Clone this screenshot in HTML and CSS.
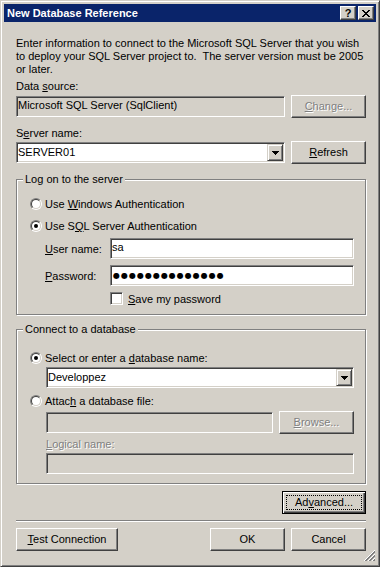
FILE: index.html
```html
<!DOCTYPE html>
<html lang="en">
<head>
    <meta charset="UTF-8">
    <title>New Database Reference</title>
    <link rel="stylesheet" href="styles.css">
</head>
<body>
    <div class="window">
        <div class="titlebar">
            <span class="title">New Database Reference</span>
            <span class="cap-btn help">?</span>
            <span class="cap-btn">
                <svg width="8" height="7" viewBox="0 0 8 7"><path d="M0 0h2v1H0zM6 0h2v1H6zM1 1h2v1H1zM5 1h2v1H5zM2 2h4v1H2zM3 3h2v1H3zM2 4h4v1H2zM1 5h2v1H1zM5 5h2v1H5zM0 6h2v1H0zM6 6h2v1H6z" fill="#000"/></svg>
            </span>
        </div>

        <div class="content">
            <p class="intro">Enter information to connect to the Microsoft SQL Server that you wish<br>to deploy your SQL Server project to.&nbsp; The server version must be 2005<br>or later.</p>

            <div class="label">Data <u>s</u>ource:</div>
            <div class="row">
                <div class="field readonly">Microsoft SQL Server (SqlClient)</div>
                <div class="btn disabled"><u>C</u>hange...</div>
            </div>

            <div class="label server">S<u>e</u>rver name:</div>
            <div class="row second">
                <div class="combo">
                    <span class="combo-text">SERVER01</span>
                    <span class="combo-btn"><svg width="7" height="4" viewBox="0 0 7 4"><path d="M0 0h7v1H0zM1 1h5v1H1zM2 2h3v1H2zM3 3h1v1H3z" fill="#000"/></svg></span>
                </div>
                <div class="btn"><u>R</u>efresh</div>
            </div>

            <div class="group logon">
                <div class="group-title">Log on to the server</div>
                <div class="option first"><span class="radio"></span><span>Use <u>W</u>indows Authentication</span></div>
                <div class="option"><span class="radio checked"></span><span>Use S<u>Q</u>L Server Authentication</span></div>
                <div class="cred-row user">
                    <span class="cred-label"><u>U</u>ser name:</span>
                    <div class="field">sa</div>
                </div>
                <div class="cred-row">
                    <span class="cred-label"><u>P</u>assword:</span>
                    <div class="field"><span class="dots">●●●●●●●●●●●●●●</span></div>
                </div>
                <div class="check-row"><span class="checkbox"></span><span><u>S</u>ave my password</span></div>
            </div>

            <div class="group database">
                <div class="group-title">Connect to a database</div>
                <div class="option first"><span class="radio checked"></span><span>Select or enter a <u>d</u>atabase name:</span></div>
                <div class="indent">
                    <div class="combo db-combo">
                        <span class="combo-text">Developpez</span>
                        <span class="combo-btn"><svg width="7" height="4" viewBox="0 0 7 4"><path d="M0 0h7v1H0zM1 1h5v1H1zM2 2h3v1H2zM3 3h1v1H3z" fill="#000"/></svg></span>
                    </div>
                </div>
                <div class="option attach"><span class="radio"></span><span>Attac<u>h</u> a database file:</span></div>
                <div class="indent">
                    <div class="row file-row">
                        <div class="field readonly"></div>
                        <div class="btn disabled"><u>B</u>rowse...</div>
                    </div>
                    <div class="label disabled-text logical"><u>L</u>ogical name:</div>
                    <div class="field readonly logical-field"></div>
                </div>
            </div>

            <div class="advanced-row">
                <div class="btn default">Ad<u>v</u>anced...</div>
            </div>

            <div class="separator"></div>

            <div class="footer">
                <div class="btn test"><u>T</u>est Connection</div>
                <div class="btn ok">OK</div>
                <div class="btn">Cancel</div>
            </div>
        </div>

        <svg class="grip" width="12" height="12" viewBox="0 0 12 12" shape-rendering="crispEdges">
            <g stroke-width="1">
                <line x1="0.5" y1="11.5" x2="11.5" y2="0.5" stroke="#fff"/>
                <line x1="1.5" y1="11.5" x2="11.5" y2="1.5" stroke="#808080"/>
                <line x1="2.5" y1="11.5" x2="11.5" y2="2.5" stroke="#808080"/>
                <line x1="4.5" y1="11.5" x2="11.5" y2="4.5" stroke="#fff"/>
                <line x1="5.5" y1="11.5" x2="11.5" y2="5.5" stroke="#808080"/>
                <line x1="6.5" y1="11.5" x2="11.5" y2="6.5" stroke="#808080"/>
                <line x1="8.5" y1="11.5" x2="11.5" y2="8.5" stroke="#fff"/>
                <line x1="9.5" y1="11.5" x2="11.5" y2="9.5" stroke="#808080"/>
                <line x1="10.5" y1="11.5" x2="11.5" y2="10.5" stroke="#808080"/>
            </g>
        </svg>
    </div>
</body>
</html>
```

FILE: styles.css
```css
body {
    margin: 0;
    background: #d4d0c8;
    font-family: "Liberation Sans", Arial, sans-serif;
    font-size: 11px;
    color: #000;
}
.window {
    position: relative;
    width: 380px;
    height: 567px;
    box-sizing: border-box;
    padding: 3px;
    background: #d4d0c8;
    border: 1px solid;
    border-color: #d4d0c8 #404040 #404040 #d4d0c8;
    box-shadow: inset 1px 1px #fff, inset -1px -1px #808080;
}
.titlebar {
    display: flex;
    align-items: center;
    height: 18px;
    padding: 0 2px 0 3px;
    background: #0a246a;
    color: #fff;
}
.title {
    flex: 1;
    font-weight: bold;
}
.cap-btn {
    display: flex;
    align-items: center;
    justify-content: center;
    width: 16px;
    height: 14px;
    box-sizing: border-box;
    margin-left: 2px;
    background: #d4d0c8;
    color: #000;
    border: 1px solid;
    border-color: #fff #404040 #404040 #fff;
    box-shadow: inset -1px -1px #808080;
}
.cap-btn.help {
    font-weight: bold;
    font-size: 11px;
    line-height: 12px;
}
.content {
    padding: 15px 10px 0 12px;
}
.intro {
    margin: 0;
    line-height: 13px;
}
.label {
    line-height: 13px;
    margin-top: 4px;
}
.label.server {
    margin-top: 9px;
}
.row {
    display: flex;
    align-items: center;
    gap: 6px;
    height: 23px;
    margin-top: 2px;
}
.row.second {
    margin-top: 1px;
}

/* sunken edit box */
.field {
    flex: 1;
    height: 21px;
    box-sizing: border-box;
    padding-left: 1px;
    line-height: 17px;
    background: #fff;
    border: 1px solid;
    border-color: #808080 #fff #fff #808080;
    box-shadow: inset 1px 1px #404040, inset -1px -1px #d4d0c8;
    white-space: nowrap;
    overflow: hidden;
}
.field.readonly {
    background: #d4d0c8;
}
.combo {
    flex: 1;
    display: flex;
    height: 21px;
    box-sizing: border-box;
    padding: 1px;
    background: #fff;
    border: 1px solid;
    border-color: #808080 #fff #fff #808080;
    box-shadow: inset 1px 1px #404040, inset -1px -1px #d4d0c8;
}
.combo-text {
    flex: 1;
    line-height: 17px;
}
.combo-btn {
    display: flex;
    align-items: center;
    justify-content: center;
    width: 16px;
    box-sizing: border-box;
    background: #d4d0c8;
    border: 1px solid;
    border-color: #d4d0c8 #404040 #404040 #d4d0c8;
    box-shadow: inset 1px 1px #fff, inset -1px -1px #808080;
}

/* push buttons */
.btn {
    width: 75px;
    height: 23px;
    box-sizing: border-box;
    flex: none;
    text-align: center;
    line-height: 21px;
    background: #d4d0c8;
    border: 1px solid;
    border-color: #fff #404040 #404040 #fff;
    box-shadow: inset -1px -1px #808080;
}
.btn.disabled,
.disabled-text {
    color: #808080;
    text-shadow: 1px 1px 0 #fff;
}
.btn.default {
    width: 84px;
    border: 1px solid #000;
    box-shadow: inset 1px 1px #fff, inset -1px -1px #404040, inset -2px -2px #808080;
    outline: 1px dotted #000;
    outline-offset: -5px;
}

/* group boxes */
.group {
    width: 350px;
    box-sizing: border-box;
    margin-top: 15px;
    padding: 0 11px 9px 13px;
    border: 1px solid #808080;
    box-shadow: inset 1px 1px #fff, 1px 1px 0 #fff;
}
.group.database {
    margin-top: 14px;
}
.group-title {
    display: table;
    margin: -7px 0 0 -7px;
    padding: 0 2px;
    line-height: 13px;
    background: #d4d0c8;
}
.option {
    display: flex;
    align-items: center;
    height: 16px;
    margin-top: 6px;
}
.option.first {
    margin-top: 10px;
}
.database .option.first {
    margin-top: 14px;
}
.database .option.attach {
    margin-top: 5px;
}
.radio {
    position: relative;
    flex: none;
    width: 12px;
    height: 12px;
    box-sizing: border-box;
    margin-right: 3px;
    border-radius: 50%;
    border: 1px solid;
    border-color: #808080 #fff #fff #808080;
}
.radio::before {
    content: "";
    position: absolute;
    inset: 0;
    box-sizing: border-box;
    border-radius: 50%;
    background: #fff;
    border: 1px solid;
    border-color: #404040 #d4d0c8 #d4d0c8 #404040;
}
.radio.checked::after {
    content: "";
    position: absolute;
    left: 3px;
    top: 3px;
    width: 4px;
    height: 4px;
    border-radius: 50%;
    background: #000;
}
.cred-row {
    display: flex;
    align-items: center;
    height: 21px;
    margin: 6px 0 0 15px;
}
.cred-row.user {
    margin-top: 4px;
}
.cred-label {
    width: 65px;
    flex: none;
}
.dots {
    font-family: "DejaVu Sans", sans-serif;
    font-size: 8px;
    letter-spacing: 1px;
    padding-left: 1px;
}
.check-row {
    display: flex;
    align-items: center;
    height: 13px;
    margin: 6px 0 0 80px;
}
.checkbox {
    width: 13px;
    height: 13px;
    box-sizing: border-box;
    margin-right: 5px;
    background: #fff;
    border: 1px solid;
    border-color: #808080 #fff #fff #808080;
    box-shadow: inset 1px 1px #404040, inset -1px -1px #d4d0c8;
}
.indent {
    margin-left: 16px;
}
.db-combo {
    margin-top: 1px;
}
.file-row {
    margin-top: 2px;
}
.label.logical {
    margin-top: 4px;
}
.logical-field {
    margin-top: 2px;
}
.advanced-row {
    display: flex;
    justify-content: flex-end;
    margin-top: 7px;
}
.separator {
    height: 1px;
    margin-top: 6px;
    border-top: 1px solid #808080;
    background: #fff;
}
.footer {
    display: flex;
    gap: 6px;
    margin-top: 6px;
}
.btn.test {
    width: 102px;
    margin-right: auto;
}
.grip {
    position: absolute;
    right: 4px;
    bottom: 4px;
}
```
